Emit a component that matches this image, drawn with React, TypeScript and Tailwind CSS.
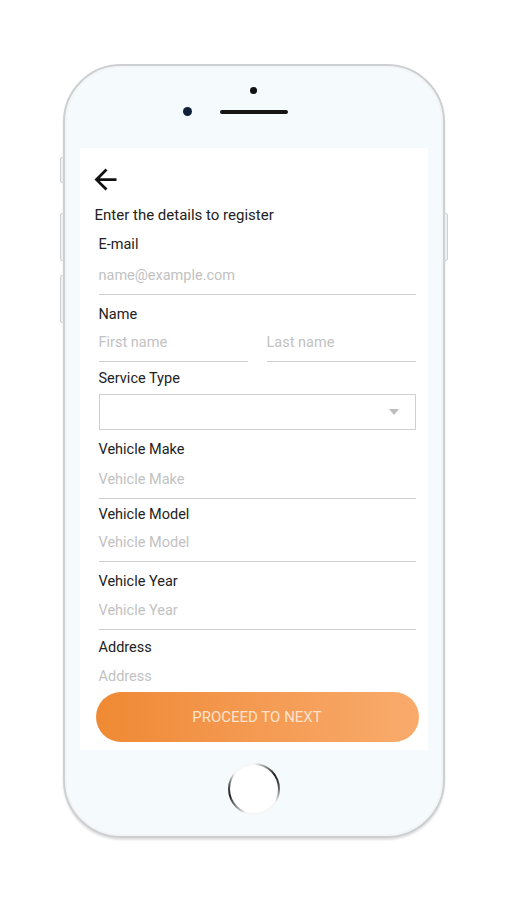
import React from "react";

function Underlined({ placeholder, className = "" }: { placeholder: string; className?: string }) {
  return (
    <div className={"border-b border-[#cfcfcf] pb-[8px] " + className}>
      <div className="h-[20px] leading-[20px] text-[14.5px] text-[#c2c2c2]">{placeholder}</div>
    </div>
  );
}

function Label({ children, className = "" }: { children: React.ReactNode; className?: string }) {
  return <div className={"h-[20px] leading-[20px] text-[14.5px] text-[#222]" + " " + className}>{children}</div>;
}

export default function App() {
  return (
    <div className="min-h-[900px] w-[507px] bg-white pt-[64px]" style={{ fontFamily: "Roboto, 'Noto Sans', sans-serif" }}>
      <div className="relative mx-auto h-[774px] w-[382px]">
        {/* side buttons */}
        <div className="absolute left-[-3px] top-[93px] h-[26px] w-[4px] rounded-l-[2px] border border-[#cfd2d5] bg-[#eef0f2]" />
        <div className="absolute left-[-3px] top-[149px] h-[48px] w-[4px] rounded-l-[2px] border border-[#cfd2d5] bg-[#eef0f2]" />
        <div className="absolute left-[-3px] top-[211px] h-[48px] w-[4px] rounded-l-[2px] border border-[#cfd2d5] bg-[#eef0f2]" />
        <div className="absolute right-[-3px] top-[149px] h-[48px] w-[4px] rounded-r-[2px] border border-[#cfd2d5] bg-[#eef0f2]" />

        <div className="flex h-full w-full flex-col rounded-[58px] border-2 border-[#cdd0d3] bg-[#f5fafc] shadow-[inset_0_0_0_2px_#f4f5f6,0_2px_2px_rgba(0,0,0,0.12)]">
          {/* top bezel */}
          <div className="flex h-[82px] flex-col">
            <div className="mx-auto mt-[21px] h-[7px] w-[7px] rounded-full bg-[#111]" />
            <div className="mt-[13px] flex items-center pl-[118px]">
              <div className="h-[9px] w-[9px] rounded-full bg-[#10223a]" />
              <div className="ml-[28px] h-[4px] w-[68px] rounded-full bg-[#151515]" />
            </div>
          </div>

          {/* screen */}
          <div className="ml-[15px] flex h-[602px] w-[348px] flex-col bg-white">
            <div className="h-[534px] overflow-hidden">
              <svg className="ml-[9.5px] mt-[14.5px] block" width="33" height="33" viewBox="0 0 24 24">
                <path d="M20 11H7.83l5.59-5.59L12 4l-8 8 8 8 1.41-1.41L7.83 13H20v-2z" fill="#111" />
              </svg>
              <div className="ml-[15px] mt-[9px] h-[20px] text-[15px] leading-[20px] text-[#222]">Enter the details to register</div>

              <div className="ml-[19px] w-[317px]">
                <Label className="mt-[10px]">E-mail</Label>
                <Underlined className="mt-[11px]" placeholder="name@example.com" />

                <Label className="mt-[10px]">Name</Label>
                <div className="mt-[8px] flex gap-[19px]">
                  <Underlined className="flex-1" placeholder="First name" />
                  <Underlined className="flex-1" placeholder="Last name" />
                </div>

                <Label className="mt-[7px]">Service Type</Label>
                <div className="mt-[5px] flex h-[36px] items-center justify-end border border-[#cfcfcf] pr-[16px]">
                  <div className="h-0 w-0 border-x-[5px] border-t-[6px] border-x-transparent border-t-[#bdbdbd]" />
                </div>

                <Label className="mt-[10px]">Vehicle Make</Label>
                <Underlined className="mt-[10px]" placeholder="Vehicle Make" />

                <Label className="mt-[6px]">Vehicle Model</Label>
                <Underlined className="mt-[8px]" placeholder="Vehicle Model" />

                <Label className="mt-[10px]">Vehicle Year</Label>
                <Underlined className="mt-[9px]" placeholder="Vehicle Year" />

                <Label className="mt-[8px]">Address</Label>
                <Underlined className="mt-[9px]" placeholder="Address" />
              </div>
            </div>

            <button className="ml-[16px] mt-[10px] flex h-[50px] w-[323px] items-center justify-center rounded-full bg-gradient-to-r from-[#ef8933] to-[#f9ab6c] text-[15px] text-[#fde3cd]">
              PROCEED TO NEXT
            </button>
          </div>

          {/* bottom bezel */}
          <div className="flex flex-1 justify-center">
            <div className="mt-[13px] h-[52px] w-[52px] rounded-full bg-[conic-gradient(from_200deg,#f5f5f5,#1a1a1a_15%,#555_22%,#f5f5f5_30%,#f5f5f5_45%,#1a1a1a_60%,#555_68%,#f5f5f5_78%,#f5f5f5)] p-[2px]">
              <div className="h-full w-full rounded-full bg-white" />
            </div>
          </div>
        </div>
      </div>
    </div>
  );
}
